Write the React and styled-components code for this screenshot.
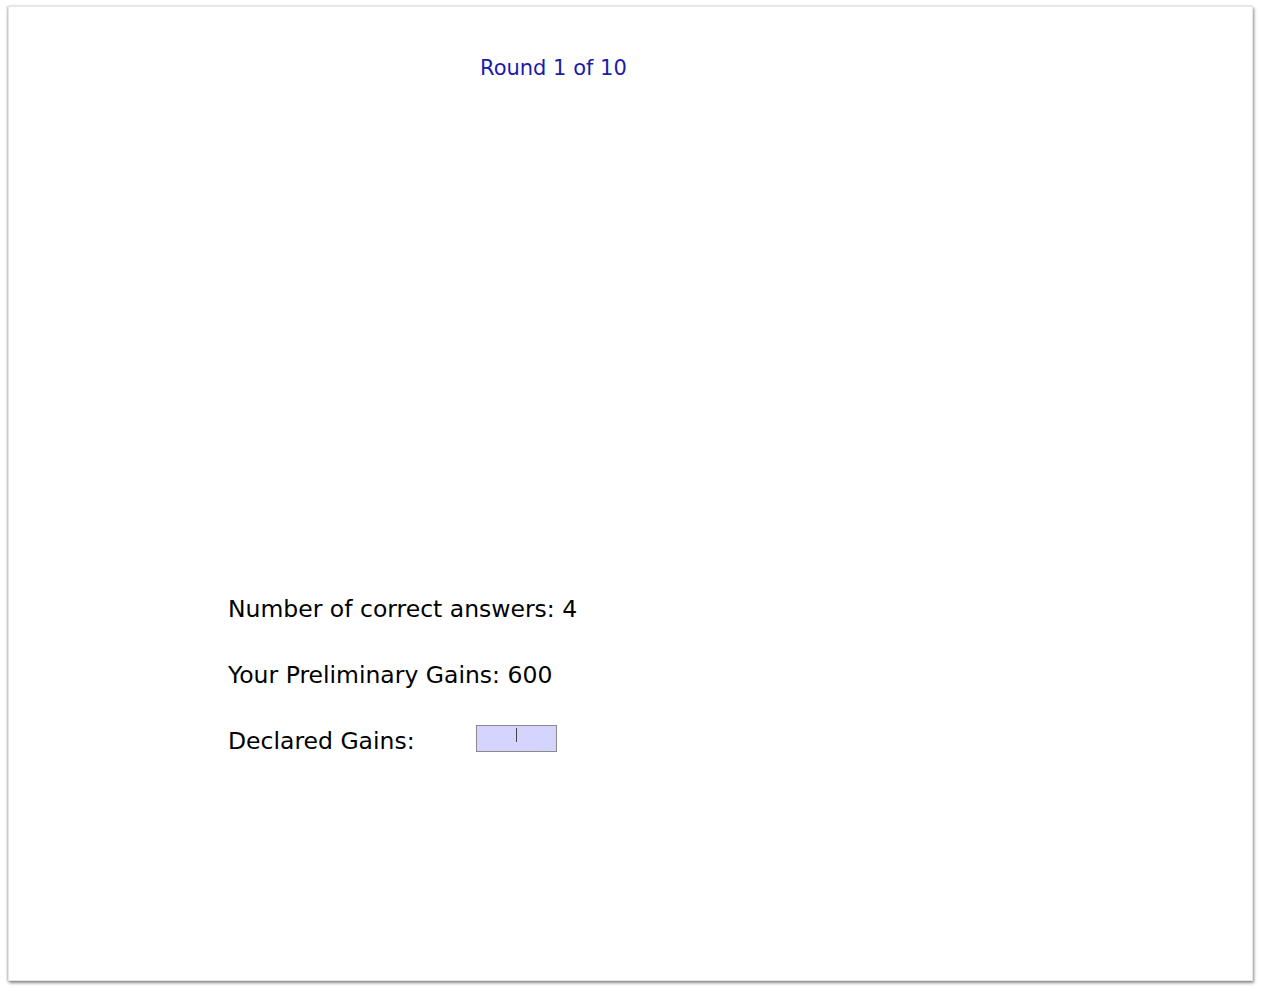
import React from "react";
import styled, { createGlobalStyle } from "styled-components";

const Global = createGlobalStyle`
  html, body { margin: 0; padding: 0; background: #ffffff; }
  body { font-family: "DejaVu Sans", Verdana, sans-serif; }
`;

const Page = styled.div`
  width: 1261px;
  height: 991px;
  box-sizing: border-box;
  padding: 6px 0 0 8px;
  background: #ffffff;
`;

const Slide = styled.div`
  width: 1245px;
  height: 975px;
  box-sizing: border-box;
  background: #ffffff;
  border: 1px solid #e6e6e6;
  box-shadow: 1px 2px 3px rgba(0, 0, 0, 0.45), -1px 0 2px rgba(0, 0, 0, 0.2);
  display: flex;
  flex-direction: column;
  padding: 46px 0 0 219px;
`;

const Title = styled.div`
  margin-left: 252px;
  font-size: 21px;
  line-height: 30px;
  color: #1c1ca8;
`;

const Rows = styled.div`
  margin-top: 508px;
  display: flex;
  flex-direction: column;
  gap: 30px;
`;

const Row = styled.div`
  display: flex;
  align-items: center;
  font-size: 23.5px;
  line-height: 36px;
  color: #000000;
`;

const Label = styled.span`
  width: 248px;
`;

const Field = styled.div`
  width: 81px;
  height: 27px;
  margin-bottom: 6px;
  box-sizing: border-box;
  background: #d4d4ff;
  border: 1px solid #8a8a8a;
  display: flex;
  justify-content: center;
  padding-top: 2px;
`;

const Caret = styled.span`
  width: 1px;
  height: 14px;
  background: #444444;
`;

export default function App() {
  return (
    <>
      <Global />
      <Page>
        <Slide>
          <Title>Round 1 of 10</Title>
          <Rows>
            <Row>Number of correct answers: 4</Row>
            <Row>Your Preliminary Gains: 600</Row>
            <Row>
              <Label>Declared Gains:</Label>
              <Field>
                <Caret />
              </Field>
            </Row>
          </Rows>
        </Slide>
      </Page>
    </>
  );
}
